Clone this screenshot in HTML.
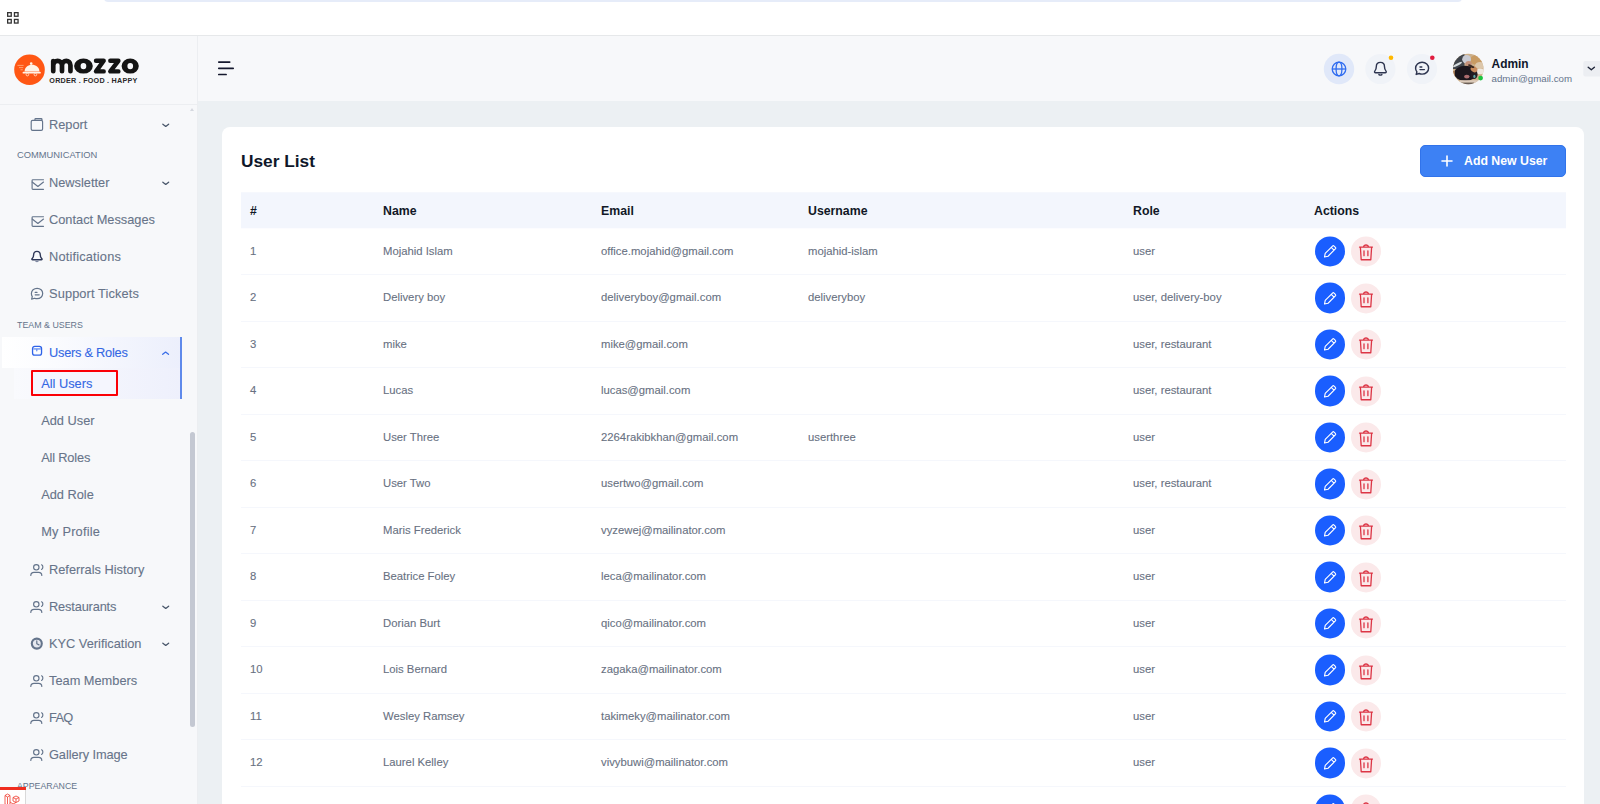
<!DOCTYPE html>
<html lang="en">
<head>
<meta charset="utf-8">
<title>User List</title>
<style>
*{box-sizing:border-box;margin:0;padding:0}
html,body{width:1600px;height:804px;overflow:hidden;background:#ecf0f3;font-family:"Liberation Sans",sans-serif;}
.abs{position:absolute}
#topbar{position:absolute;left:0;top:0;width:1600px;height:36px;background:#fff;border-bottom:1px solid #e6e8ea}
#topstrip{position:absolute;left:104px;top:-6px;width:1358px;height:7.5px;border-radius:7px;background:#e6ecf9}
#sidebar{position:absolute;left:0;top:36px;width:198px;height:768px;background:#f7f8fa;border-right:1px solid #eceef1}
#logoarea{position:absolute;left:0;top:0;width:197px;height:69px;border-bottom:1px solid #eceef1}
#header{position:absolute;left:198px;top:36px;width:1402px;height:65px;background:#f7f8fa}
#card{position:absolute;left:222px;top:127px;width:1362px;height:700px;background:#fff;border-radius:8px}
.nav{position:absolute;left:49px;font-size:12.8px;color:#677489;white-space:nowrap;line-height:16px;-webkit-text-stroke:0.1px currentColor}
.nav.sub{left:41.2px}
.nav.act{color:#3367e4}
.sec{position:absolute;left:17px;color:#64748b;white-space:nowrap;line-height:12px}
.ico{position:absolute;left:28.5px;width:16px;height:20px;overflow:visible}
.chev{position:absolute;left:161.2px;width:9.4px;height:6.3px;overflow:visible}
.actbg{position:absolute;left:2px;top:301px;width:179px;height:31px;background:linear-gradient(90deg,#ffffff 0%,#fafbfe 30%,#eceffc 100%)}
.subbg{position:absolute;left:14px;top:332px;width:167px;height:31px;background:linear-gradient(90deg,#f9fafd 0%,#eef0fc 100%)}
.actline{position:absolute;left:180px;top:301px;width:2px;height:62px;background:#5f8aeb}
.redbox{position:absolute;left:31px;top:334px;width:87px;height:26px;border:2px solid #fb0007;background:#f5f6fe;border-radius:1px}
.sbar{position:absolute;left:190px;top:396px;width:5px;height:294.5px;border-radius:3px;background:#c4c8d2}
.sbarup{position:absolute;left:190px;top:72px;width:0;height:0;border-left:2.5px solid transparent;border-right:2.5px solid transparent;border-bottom:3px solid #d5d8df}
.dbg{position:absolute;left:0;top:751px;width:26px;height:17px;background:#fff;border-right:1px solid #d9d9d9}
.dbgbar{position:absolute;left:0;top:0;width:26px;height:3px;background:#ef2d1f}
.title{position:absolute;left:19px;top:23px;font-size:17.3px;font-weight:700;color:#0f172a;line-height:22px;white-space:nowrap}
.addbtn{position:absolute;left:1198px;top:18px;width:146px;height:32px;border-radius:5px;background:#3d81f4;border:1px solid #3173ea;color:#fff;font-size:12.3px;font-weight:700;line-height:30px;white-space:nowrap}
.addbtn svg{position:absolute;left:20.4px;top:9px}
.addbtn span{position:absolute;left:43px;top:0}
.thead{position:absolute;left:19px;top:65px;width:1325px;height:36.3px;transform:translateY(0.3px);background:#f3f6fd;font-size:12.3px;font-weight:700;color:#111827;line-height:36px}
.thead span,.row span{position:absolute;top:0;white-space:nowrap}
.thead span{top:0.7px}
.row{position:absolute;left:19px;width:1325px;height:46.5px;border-bottom:1px solid #f5f7fc;font-size:11.3px;color:#687182;line-height:45.5px;-webkit-text-stroke:0.1px currentColor}
.ed,.dl{position:absolute;top:8px;width:30px;height:30px;border-radius:50%;transform:translateY(0.45px)}
.ed{left:1073.6px;top:7.3px;width:30.5px;height:30.5px;background:#1a5eff}
.dl{left:1110px;top:7.7px;background:#fbe9ea}
.ed svg{position:absolute;left:8px;top:8.5px}
.dl svg{position:absolute;left:7px;top:7px}
.adm{position:absolute;left:1293.6px;top:19.7px;font-size:11.9px;font-weight:700;color:#0f172a;line-height:16px;white-space:nowrap}
.adme{position:absolute;left:1293.6px;top:35.5px;font-size:9.7px;color:#64748b;line-height:14px;white-space:nowrap}
</style>
</head>
<body>
<svg width="0" height="0" style="position:absolute"><defs>
<symbol id="pen" viewBox="0 0 14 14" overflow="visible"><g transform="translate(7 7) scale(1.14) translate(-7 -7)"><path d="M9.2 2.3Q9.9 1.6 10.6 2.3L11.7 3.4Q12.4 4.1 11.7 4.8L5.3 11.2L2.2 11.9L2.8 8.7Z M8.1 3.5L10.5 5.9" fill="none" stroke="#fff" stroke-width="1" stroke-linejoin="round" stroke-linecap="round"/></g></symbol>
<symbol id="bin" viewBox="0 0 16 18" overflow="visible"><path d="M1.5 3.6H14.5M5.6 3.4C5.6 0.9 10.4 0.9 10.4 3.4M2.4 3.9L3.2 16.3H12.8L13.6 3.9M6 7.4V12.2M9.9 7.4V12.2" fill="none" stroke="#dc3545" stroke-width="1.3" stroke-linecap="round" stroke-linejoin="round"/></symbol>
<g id="i-box" fill="none" stroke="#64748b" stroke-width="1.15" stroke-linejoin="round"><path d="M5.9 4.2V3.4Q5.9 2.6 6.7 2.6H12.2Q13 2.6 13 3.4V4.2M3.6 4.3H12.2Q13.6 4.3 13.6 5.7V13Q13.6 14.4 12.2 14.4H3.6Q2.2 14.4 2.2 13V5.7Q2.2 4.3 3.6 4.3Z"/></g>
<g id="i-boxb" fill="none" stroke="#2f63e8" stroke-width="1.3" stroke-linejoin="round"><rect x="3.55" y="2.35" width="9" height="8.8" rx="2.2"/><path d="M4.2 4.9H11.9" stroke="#7ea2f3" stroke-width="1.6"/><path d="M7.8 5.6V6.8" stroke="#5c88f0" stroke-width="1.2" stroke-linecap="round"/></g>
<g id="i-mail" fill="none" stroke="#64748b" stroke-width="1.15" stroke-linecap="round" stroke-linejoin="round"><path d="M14.5 5.7H3.9Q3.1 5.7 3.1 6.5V14.5Q3.1 15.3 3.9 15.3H14.5" /><path d="M3.2 8L8.9 12.5L14.5 8"/></g>
<g id="i-bell" fill="none" stroke-linecap="round" stroke-linejoin="round"><path d="M7.95 3.4C5.6 3.4 4.6 5 4.6 7C4.6 9 4.2 9.8 3.2 10.6C2.5 11.2 2.9 11.7 3.6 11.7H12.3C13 11.7 13.4 11.2 12.7 10.6C11.7 9.8 11.3 9 11.3 7C11.3 5 10.3 3.4 7.95 3.4Z" stroke="#2f3858" stroke-width="1.4"/><path d="M6.7 13.1Q7.95 14.2 9.2 13.1" stroke="#7f89a2" stroke-width="1.1"/></g>
<g id="i-chat" fill="none" stroke="#64748b" stroke-width="1.2" stroke-linecap="round" stroke-linejoin="round"><path d="M8.1 3.3C11.3 3.3 13.7 5.6 13.7 8.5C13.7 11.4 11.3 13.7 8.1 13.7C7.1 13.7 6.3 13.5 5.6 13.2L2.6 14.1L3.3 11.7C2.7 10.8 2.4 9.7 2.4 8.5C2.4 5.6 4.9 3.3 8.1 3.3Z"/><path d="M6.2 7.4H8M6.2 9.8H10.2"/></g>
<g id="i-users" fill="none" stroke="#64748b" stroke-width="1.15" stroke-linecap="round"><circle cx="7.3" cy="6.3" r="2.7"/><path d="M1.8 14.4C1.8 12.2 3.4 11.3 5 11.3H9.6C11.2 11.3 12.8 12.2 12.8 14.4M12.6 3.8C14.3 4.6 14.3 7.6 12.6 8.4"/></g>
<g id="i-clock"><circle cx="7.8" cy="8.6" r="5" fill="#e6e9f0" stroke="#64748b" stroke-width="2.1"/><path d="M7.8 5.9V8.8L10 9.9" fill="none" stroke="#64748b" stroke-width="1.2" stroke-linecap="round" stroke-linejoin="round"/></g>
</defs></svg>
<div id="topbar"><div id="topstrip"></div>
<svg class="abs" style="left:7px;top:12.4px" width="12" height="12" viewBox="0 0 12 12" fill="none" stroke="#333" stroke-width="1.3"><rect x="0.65" y="0.65" width="3.6" height="3.6"/><rect x="7.45" y="0.65" width="3.6" height="3.6"/><rect x="0.65" y="7.45" width="3.6" height="3.6"/><rect x="7.45" y="7.45" width="3.6" height="3.6"/></svg>
</div>

<div id="sidebar">
<div id="logoarea"><svg width="197" height="68" viewBox="0 36 197 68" style="position:absolute;left:0;top:0">
<circle cx="29.5" cy="69.8" r="15.3" fill="#ff5714"/>
<path d="M17.5 65.4H23.6M19 67.6H23.2M20.5 69.8H22.8" stroke="#ffa877" stroke-width="0.9" fill="none"/>
<path d="M24.6 71.6 C24.6 62.6 39.4 62.6 39.4 71.6 Z" fill="#fff3e6"/>
<circle cx="31.2" cy="63.6" r="1.3" fill="#fff3e6"/>
<rect x="22.6" y="71.7" width="18.2" height="1.9" rx="0.9" fill="#fff3e6"/>
<circle cx="27.4" cy="74.6" r="1.3" fill="none" stroke="#ffd9bf" stroke-width="0.9"/><circle cx="35.4" cy="74.6" r="1.3" fill="none" stroke="#ffd9bf" stroke-width="0.9"/>
<g fill="none" stroke="#141414" stroke-width="4.7" stroke-linecap="round" stroke-linejoin="round">
<path d="M53.25 71.25V61M53.25 65.2C53.25 59.4 62 59.4 62 65.2V71.25M62 65.2C62 59.4 70.45 59.4 70.45 65.2V71.25"/>
<path stroke-width="4.4" d="M96 60.8H103.7L96 71.4H103.7M110.3 60.8H118.4L110.3 71.4H118.4"/>
</g>
<path fill="#141414" fill-rule="evenodd" d="M74.1 66.1a9.35 7.5 0 1 0 18.7 0a9.35 7.5 0 1 0 -18.7 0ZM80.6 66.1a2.85 3.2 0 1 0 5.7 0a2.85 3.2 0 1 0 -5.7 0ZM121.6 66.1a8.6 7.5 0 1 0 17.2 0a8.6 7.5 0 1 0 -17.2 0ZM127.4 66.1a2.85 3.2 0 1 0 5.7 0a2.85 3.2 0 1 0 -5.7 0Z"/>
<text x="49.3" y="83.1" font-family="Liberation Sans, sans-serif" font-weight="700" font-size="7.2" fill="#2a2a2a" textLength="88" lengthAdjust="spacing">ORDER . FOOD . HAPPY</text>
</svg></div>
<!--NAV-->
<div class="actbg"></div><div class="subbg"></div><div class="actline"></div><div class="redbox"></div>
<svg class="ico" style="top:78px" viewBox="0 -2 16 20"><use href="#i-box"/></svg>
<div class="nav " style="top:80.7px">Report</div>
<svg class="chev" style="top:85.5px" viewBox="0 0 9.4 6.3"><path d="M1.85 2.25 L4.75 4.45 L7.65 2.25" fill="none" stroke="#475569" stroke-width="1.3" stroke-linecap="round" stroke-linejoin="round"/></svg>
<svg class="ico" style="top:136px" viewBox="0 -2 16 20"><use href="#i-mail"/></svg>
<div class="nav " style="top:138.7px">Newsletter</div>
<svg class="chev" style="top:143.5px" viewBox="0 0 9.4 6.3"><path d="M1.85 2.25 L4.75 4.45 L7.65 2.25" fill="none" stroke="#475569" stroke-width="1.3" stroke-linecap="round" stroke-linejoin="round"/></svg>
<svg class="ico" style="top:173px" viewBox="0 -2 16 20"><use href="#i-mail"/></svg>
<div class="nav " style="top:175.7px">Contact Messages</div>
<svg class="ico" style="top:210px" viewBox="0 -2 16 20"><use href="#i-bell"/></svg>
<div class="nav " style="top:212.7px;letter-spacing:0.18px">Notifications</div>
<svg class="ico" style="top:247px" viewBox="0 -2 16 20"><use href="#i-chat"/></svg>
<div class="nav " style="top:249.7px;letter-spacing:0.12px">Support Tickets</div>
<svg class="ico" style="top:306px" viewBox="0 -2 16 20"><use href="#i-boxb"/></svg>
<div class="nav act" style="top:308.7px;letter-spacing:-0.25px">Users &amp; Roles</div>
<svg class="chev" style="top:313.5px" viewBox="0 0 9.4 6.3"><path d="M1.7 4.3 L4.6 2.1 L7.5 4.3" fill="none" stroke="#3b6fe8" stroke-width="1.3" stroke-linecap="round" stroke-linejoin="round"/></svg>
<div class="nav sub act" style="top:339.7px">All Users</div>
<div class="nav sub" style="top:376.7px">Add User</div>
<div class="nav sub" style="top:413.7px;letter-spacing:-0.17px">All Roles</div>
<div class="nav sub" style="top:450.7px">Add Role</div>
<div class="nav sub" style="top:487.7px;letter-spacing:0.2px">My Profile</div>
<svg class="ico" style="top:523px" viewBox="0 -2 16 20"><use href="#i-users"/></svg>
<div class="nav " style="top:525.7px">Referrals History</div>
<svg class="ico" style="top:560px" viewBox="0 -2 16 20"><use href="#i-users"/></svg>
<div class="nav " style="top:562.7px;letter-spacing:-0.16px">Restaurants</div>
<svg class="chev" style="top:567.5px" viewBox="0 0 9.4 6.3"><path d="M1.85 2.25 L4.75 4.45 L7.65 2.25" fill="none" stroke="#475569" stroke-width="1.3" stroke-linecap="round" stroke-linejoin="round"/></svg>
<svg class="ico" style="top:597px" viewBox="0 -2 16 20"><use href="#i-clock"/></svg>
<div class="nav " style="top:599.7px">KYC Verification</div>
<svg class="chev" style="top:604.5px" viewBox="0 0 9.4 6.3"><path d="M1.85 2.25 L4.75 4.45 L7.65 2.25" fill="none" stroke="#475569" stroke-width="1.3" stroke-linecap="round" stroke-linejoin="round"/></svg>
<svg class="ico" style="top:634px" viewBox="0 -2 16 20"><use href="#i-users"/></svg>
<div class="nav " style="top:636.7px">Team Members</div>
<svg class="ico" style="top:671px" viewBox="0 -2 16 20"><use href="#i-users"/></svg>
<div class="nav " style="top:673.7px;letter-spacing:-0.7px">FAQ</div>
<svg class="ico" style="top:708px" viewBox="0 -2 16 20"><use href="#i-users"/></svg>
<div class="nav " style="top:710.7px;letter-spacing:-0.08px">Gallery Image</div>
<div class="sec" style="top:112.9px;font-size:9.35px">COMMUNICATION</div>
<div class="sec" style="top:282.7px;font-size:8.85px">TEAM &amp; USERS</div>
<div class="sec" style="top:743.9px;font-size:8.8px">APPEARANCE</div>
<div class="sbar"></div><div class="sbarup"></div>
<div class="dbg"><div class="dbgbar"></div><svg width="18" height="12" viewBox="0 0 18 12" style="position:absolute;left:4px;top:6px" fill="none" stroke="#ef3b2d" stroke-width="0.8"><path d="M1 2.5 L3.5 1 L6 2.5 V11 L3.5 12.5 L1 11 Z M3.5 4 V12.5 M1 2.5 L3.5 4 L6 2.5 M9 4.5 L12 3 L15 4.5 V8 L12 9.5 L9 8 Z M9 4.5 L12 6 L15 4.5 M12 6 V9.5 M6 9 L9 11 L12 9.5"/></svg></div>
<!--/NAV-->
</div>

<div id="header">
<!--HEADER-->
<svg width="1402" height="65" viewBox="198 36 1402 65" style="position:absolute;left:0;top:0">
<path d="M218.8 62.1H229.7M218.8 68.3H233.2M218.8 74.5H226.1" stroke="#15182e" stroke-width="1.7" stroke-linecap="round" fill="none"/>
<circle cx="1339" cy="69" r="15.2" fill="#e0e8f9"/>
<g fill="none" stroke="#2f6cf0" stroke-width="1.3"><circle cx="1339" cy="69" r="6.8"/><ellipse cx="1339" cy="69" rx="2.9" ry="6.8"/><path d="M1332.2 69H1345.8"/></g>
<circle cx="1380.4" cy="69" r="15.1" fill="#f0f3f8"/>
<path d="M1380.4 62.4C1377.2 62.4 1376.3 64.8 1376.3 66.8C1376.3 69.2 1375.6 70.2 1374.8 71.1C1374.2 71.8 1374.6 72.8 1375.6 72.8H1385.2C1386.2 72.8 1386.6 71.8 1386 71.1C1385.2 70.2 1384.5 69.2 1384.5 66.8C1384.5 64.8 1383.6 62.4 1380.4 62.4ZM1378.9 74.6Q1380.4 75.6 1381.9 74.6" fill="none" stroke="#2d3550" stroke-width="1.4" stroke-linecap="round" stroke-linejoin="round"/>
<circle cx="1391" cy="57.8" r="2.3" fill="#ffb800"/>
<circle cx="1422" cy="69" r="15.1" fill="#f0f3f8"/>
<path d="M1422.1 62.3C1425.9 62.3 1428.6 64.9 1428.6 68.2C1428.6 71.5 1425.9 74.1 1422.1 74.1C1421 74.1 1420 73.9 1419.2 73.5L1416.2 74.4L1416.9 71.9C1416.1 70.8 1415.6 69.6 1415.6 68.2C1415.6 64.9 1418.3 62.3 1422.1 62.3ZM1420 66.9H1421.8M1420 69.6H1424.4" fill="none" stroke="#2d3550" stroke-width="1.45" stroke-linecap="round" stroke-linejoin="round"/>
<circle cx="1432.3" cy="57.8" r="2.3" fill="#e11d3f"/>
<defs><clipPath id="avc"><circle cx="1468.25" cy="69" r="15.3"/></clipPath><filter id="avb" x="-20%" y="-20%" width="140%" height="140%"><feGaussianBlur stdDeviation="0.6"/></filter></defs>
<g clip-path="url(#avc)"><rect x="1452" y="53" width="33" height="33" fill="#cdb08a"/>
<g filter="url(#avb)">
<rect x="1452" y="53" width="12.5" height="16" fill="#41454b"/>
<ellipse cx="1477" cy="60" rx="7" ry="5" fill="#c89b64"/>
<ellipse cx="1480" cy="65.5" rx="5" ry="3.5" fill="#dcc7ab"/>
<ellipse cx="1480" cy="71.5" rx="5" ry="2.8" fill="#efe8df"/>
<ellipse cx="1457.5" cy="64.5" rx="5" ry="1.1" fill="#d4dbdd" transform="rotate(-28 1457.5 64.5)"/>
<ellipse cx="1466.6" cy="59.3" rx="4.4" ry="4.3" fill="#c9cbd3"/>
<ellipse cx="1468.6" cy="63.6" rx="3.2" ry="2.6" fill="#c4917a"/>
<ellipse cx="1465.3" cy="73.3" rx="11.2" ry="7.6" fill="#1d181f"/>
<ellipse cx="1474" cy="74.5" rx="3.6" ry="4.6" fill="#221c22"/>
<ellipse cx="1474" cy="69.3" rx="3.6" ry="2.7" fill="#c78a5c" transform="rotate(35 1474 69.3)"/>
<ellipse cx="1471.2" cy="66.2" rx="3.4" ry="1.1" fill="#3a2a22" transform="rotate(25 1471.2 66.2)"/>
<ellipse cx="1466.8" cy="76.6" rx="2.7" ry="1.9" fill="#ad6c6e"/>
<ellipse cx="1474.4" cy="76.4" rx="1.1" ry="1.6" fill="#5fa7a6"/>
<rect x="1460" y="80.2" width="19" height="2.6" fill="#dccbbb"/>
<rect x="1460" y="82.6" width="14" height="2.4" fill="#6a5f58"/>
<rect x="1452" y="71" width="2.8" height="6" fill="#a87a52"/>
</g></g>
<circle cx="1480.6" cy="78.1" r="2.4" fill="#1ec43f"/>
<rect x="1583.3" y="61" width="18" height="15.5" rx="2" fill="#eceef2"/>
<path d="M1588.2 67.2L1591.3 69.8L1594.4 67.2" fill="none" stroke="#1e2438" stroke-width="1.4" stroke-linecap="round" stroke-linejoin="round"/>
</svg>
<div class="adm">Admin</div><div class="adme">admin@gmail.com</div>
<!--/HEADER-->
</div>

<div id="card">
<!--CARD-->
<div class="title">User List</div>
<div class="addbtn"><svg width="12" height="12" viewBox="0 0 12 12" stroke="#fff" stroke-width="1.6" stroke-linecap="round"><path d="M6 1v10M1 6h10"/></svg><span>Add New User</span></div>
<div class="thead"><span style="left:9px">#</span><span style="left:142px">Name</span><span style="left:360px">Email</span><span style="left:567px">Username</span><span style="left:892px">Role</span><span style="left:1073px">Actions</span></div>
<div class="row" style="top:101.5px"><span style="left:9px">1</span><span style="left:142px">Mojahid Islam</span><span style="left:360px">office.mojahid@gmail.com</span><span style="left:567px">mojahid-islam</span><span style="left:892px">user</span><i class="ed"><svg width="14" height="14" viewBox="0 0 14 14"><use href="#pen"/></svg></i><i class="dl"><svg width="16" height="18" viewBox="0 0 16 18"><use href="#bin"/></svg></i></div>
<div class="row" style="top:148.0px"><span style="left:9px">2</span><span style="left:142px">Delivery boy</span><span style="left:360px">deliveryboy@gmail.com</span><span style="left:567px">deliveryboy</span><span style="left:892px">user, delivery-boy</span><i class="ed"><svg width="14" height="14" viewBox="0 0 14 14"><use href="#pen"/></svg></i><i class="dl"><svg width="16" height="18" viewBox="0 0 16 18"><use href="#bin"/></svg></i></div>
<div class="row" style="top:194.5px"><span style="left:9px">3</span><span style="left:142px">mike</span><span style="left:360px">mike@gmail.com</span><span style="left:892px">user, restaurant</span><i class="ed"><svg width="14" height="14" viewBox="0 0 14 14"><use href="#pen"/></svg></i><i class="dl"><svg width="16" height="18" viewBox="0 0 16 18"><use href="#bin"/></svg></i></div>
<div class="row" style="top:241.0px"><span style="left:9px">4</span><span style="left:142px">Lucas</span><span style="left:360px">lucas@gmail.com</span><span style="left:892px">user, restaurant</span><i class="ed"><svg width="14" height="14" viewBox="0 0 14 14"><use href="#pen"/></svg></i><i class="dl"><svg width="16" height="18" viewBox="0 0 16 18"><use href="#bin"/></svg></i></div>
<div class="row" style="top:287.5px"><span style="left:9px">5</span><span style="left:142px">User Three</span><span style="left:360px">2264rakibkhan@gmail.com</span><span style="left:567px">userthree</span><span style="left:892px">user</span><i class="ed"><svg width="14" height="14" viewBox="0 0 14 14"><use href="#pen"/></svg></i><i class="dl"><svg width="16" height="18" viewBox="0 0 16 18"><use href="#bin"/></svg></i></div>
<div class="row" style="top:334.0px"><span style="left:9px">6</span><span style="left:142px">User Two</span><span style="left:360px">usertwo@gmail.com</span><span style="left:892px">user, restaurant</span><i class="ed"><svg width="14" height="14" viewBox="0 0 14 14"><use href="#pen"/></svg></i><i class="dl"><svg width="16" height="18" viewBox="0 0 16 18"><use href="#bin"/></svg></i></div>
<div class="row" style="top:380.5px"><span style="left:9px">7</span><span style="left:142px">Maris Frederick</span><span style="left:360px">vyzewej@mailinator.com</span><span style="left:892px">user</span><i class="ed"><svg width="14" height="14" viewBox="0 0 14 14"><use href="#pen"/></svg></i><i class="dl"><svg width="16" height="18" viewBox="0 0 16 18"><use href="#bin"/></svg></i></div>
<div class="row" style="top:427.0px"><span style="left:9px">8</span><span style="left:142px">Beatrice Foley</span><span style="left:360px">leca@mailinator.com</span><span style="left:892px">user</span><i class="ed"><svg width="14" height="14" viewBox="0 0 14 14"><use href="#pen"/></svg></i><i class="dl"><svg width="16" height="18" viewBox="0 0 16 18"><use href="#bin"/></svg></i></div>
<div class="row" style="top:473.5px"><span style="left:9px">9</span><span style="left:142px">Dorian Burt</span><span style="left:360px">qico@mailinator.com</span><span style="left:892px">user</span><i class="ed"><svg width="14" height="14" viewBox="0 0 14 14"><use href="#pen"/></svg></i><i class="dl"><svg width="16" height="18" viewBox="0 0 16 18"><use href="#bin"/></svg></i></div>
<div class="row" style="top:520.0px"><span style="left:9px">10</span><span style="left:142px">Lois Bernard</span><span style="left:360px">zagaka@mailinator.com</span><span style="left:892px">user</span><i class="ed"><svg width="14" height="14" viewBox="0 0 14 14"><use href="#pen"/></svg></i><i class="dl"><svg width="16" height="18" viewBox="0 0 16 18"><use href="#bin"/></svg></i></div>
<div class="row" style="top:566.5px"><span style="left:9px">11</span><span style="left:142px">Wesley Ramsey</span><span style="left:360px">takimeky@mailinator.com</span><span style="left:892px">user</span><i class="ed"><svg width="14" height="14" viewBox="0 0 14 14"><use href="#pen"/></svg></i><i class="dl"><svg width="16" height="18" viewBox="0 0 16 18"><use href="#bin"/></svg></i></div>
<div class="row" style="top:613.0px"><span style="left:9px">12</span><span style="left:142px">Laurel Kelley</span><span style="left:360px">vivybuwi@mailinator.com</span><span style="left:892px">user</span><i class="ed"><svg width="14" height="14" viewBox="0 0 14 14"><use href="#pen"/></svg></i><i class="dl"><svg width="16" height="18" viewBox="0 0 16 18"><use href="#bin"/></svg></i></div>
<div class="row" style="top:659.5px"><span style="left:9px">13</span><i class="ed"><svg width="14" height="14" viewBox="0 0 14 14"><use href="#pen"/></svg></i><i class="dl"><svg width="16" height="18" viewBox="0 0 16 18"><use href="#bin"/></svg></i></div>
<!--/CARD-->
</div>
</body>
</html>
